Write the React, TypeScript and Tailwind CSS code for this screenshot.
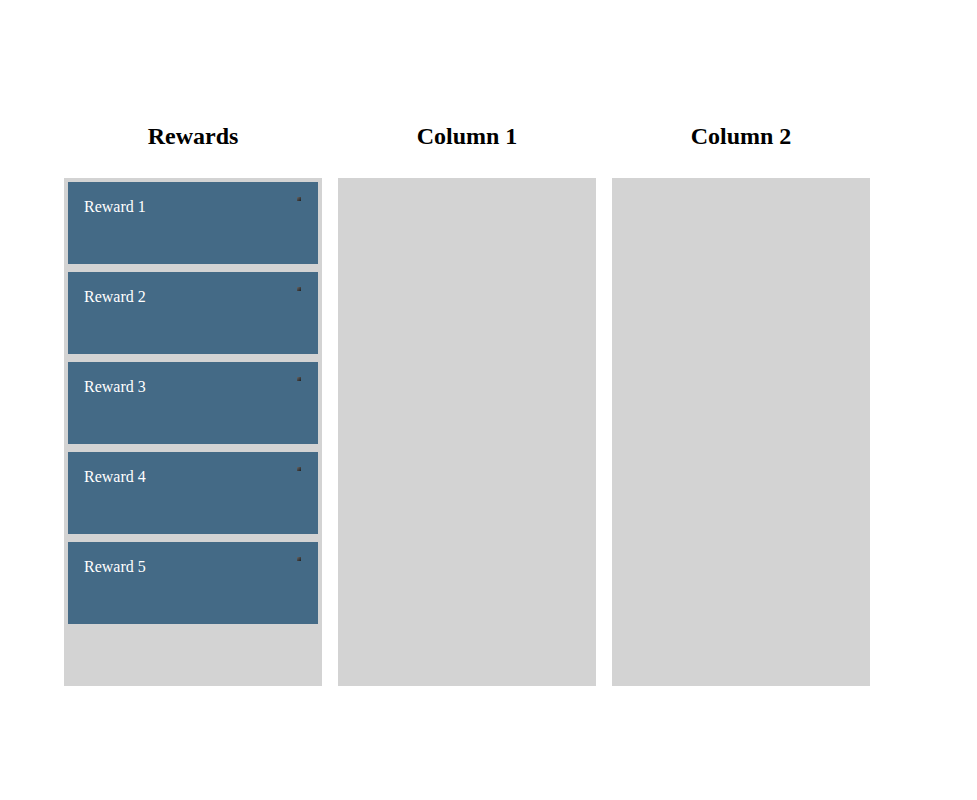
const columns = [
  { title: 'Rewards', items: ['Reward 1', 'Reward 2', 'Reward 3', 'Reward 4', 'Reward 5'] },
  { title: 'Column 1', items: [] as string[] },
  { title: 'Column 2', items: [] as string[] },
];

export default function App() {
  return (
    <div className="min-h-[800px] w-full bg-white pt-[122px] pl-[64px] font-['Liberation_Serif',serif]">
      <div className="flex gap-4">
        {columns.map((col) => (
          <div key={col.title} className="w-[258px] flex flex-col">
            <h2 className="text-[24px] font-bold leading-[28px] text-center text-black mb-[28px]">
              {col.title}
            </h2>
            <div className="h-[508px] bg-[#d3d3d3] p-1 flex flex-col gap-2">
              {col.items.map((item) => (
                <div key={item} className="relative h-[82px] bg-[#446a86] p-4 text-white text-[16px] leading-[18px]">
                  {item}
                  {/* little handle in the corner */}
                  <span className="absolute top-[15px] right-[17px] w-[4px] h-[4px] bg-gradient-to-br from-[#6a6a6a] to-[#1e1e1e]" />
                </div>
              ))}
            </div>
          </div>
        ))}
      </div>
    </div>
  );
}
